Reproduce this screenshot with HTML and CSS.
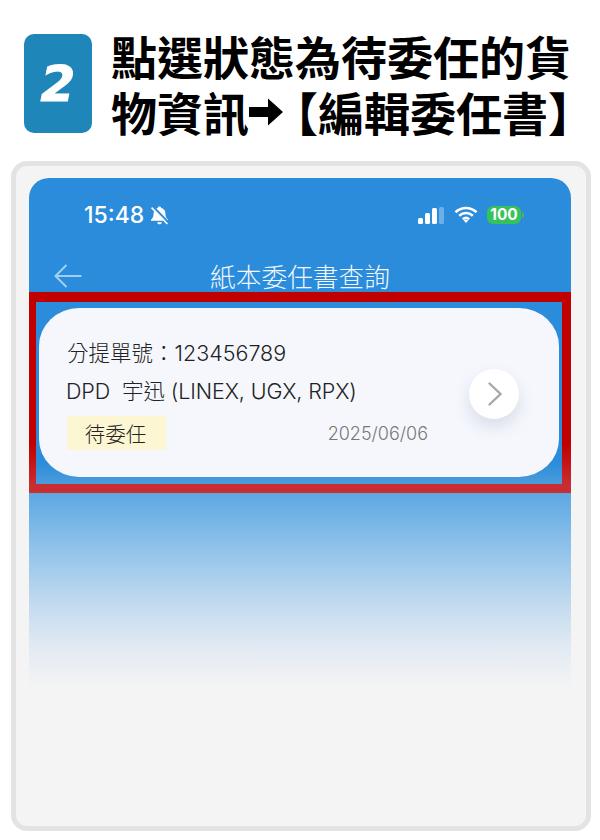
FILE: index.html
```html
<!DOCTYPE html>
<html lang="zh-Hant">
<head>
<meta charset="utf-8">
<title>點選狀態為待委任的貨物資訊</title>
<link rel="stylesheet" href="styles.css">
</head>
<body>
<header class="step">
  <div class="badge"><span class="badge-num">2</span></div>
  <h1 class="step-title">點選狀態為待委任的貨<br>物資訊<svg class="arrow" viewBox="0 0 46 46" aria-hidden="true"><path d="M0 18h19V9.500L34 23 19 36.500V28H0z"/></svg><span class="bracket">【</span>編輯委任書<span class="bracket-end">】</span></h1>
</header>
<main class="frame">
  <section class="phone">
    <div class="status">
      <span class="time">15:48</span>
      <svg class="bell" viewBox="0 0 18 18" aria-hidden="true"><path class="bell-body" d="M9 .5c.9 0 1.500.6 1.600 1.300 2.700.7 4 2.800 4 5.600 0 2.900.9 4.100 2.400 5.500v1H1v-1c1.500-1.400 2.400-2.600 2.400-5.500 0-2.800 1.300-4.900 4-5.600C7.500 1.100 8.100.5 9 .5zM6.800 15.300h4.400c-.2 1.300-1.100 2.100-2.200 2.100s-2-.8-2.200-2.100z"/><path class="bell-cut" d="M2.800 .5l15 15.500"/><path class="bell-slash" d="M1.500 1.500l15 15.500"/></svg>
      <span class="status-gap"></span>
      <svg class="signal" viewBox="0 0 26 17" aria-hidden="true"><rect x="0" y="11" width="5" height="6" rx="1.500"/><rect x="7" y="6" width="5" height="11" rx="1.500"/><rect x="14" y="1" width="5" height="16" rx="1.500"/><rect class="signal-off" x="21" y="0" width="5" height="17" rx="1.500"/></svg>
      <svg class="wifi" viewBox="0 0 24 17" aria-hidden="true"><path d="M1.500 6.200C7.500 .6 16.500 .6 22.500 6.200M5.200 9.800c4-3.700 9.600-3.700 13.600 0M8.800 13.200c1.900-1.700 4.500-1.700 6.400 0"/><path class="wifi-dot" d="M12 17l-2.300-2.500c1.400-.9 3.200-.9 4.600 0z"/></svg>
      <span class="battery">100</span><span class="battery-tip"></span>
    </div>
    <nav class="nav">
      <svg class="back" viewBox="0 0 28 24" aria-hidden="true"><path d="M27.500 12H1.500M12.500 1L1.500 12l11 11"/></svg>
      <span class="nav-title">紙本委任書查詢</span>
    </nav>
    <div class="highlight">
      <article class="card">
        <div class="card-main">
          <p class="line">分提單號：123456789</p>
          <p class="line line-two">DPD&nbsp; 宇迅 (LINEX, UGX, RPX)</p>
          <div class="meta">
            <span class="tag">待委任</span>
            <span class="date">2025/06/06</span>
          </div>
        </div>
        <div class="go"><svg class="chev" viewBox="0 0 14 24" aria-hidden="true"><path d="M1.500 1.500L12.500 12 1.500 22.500"/></svg></div>
      </article>
    </div>
  </section>
</main>
</body>
</html>
```
FILE: styles.css
```css
* { box-sizing: border-box; }
html, body { margin: 0; padding: 0; background: #fff; }
body {
  width: 600px;
  height: 840px;
  overflow: hidden;
  font-family: Inter, "Noto Sans CJK TC", sans-serif;
}
.step {
  display: flex;
  align-items: flex-start;
  gap: 19px;
  height: 161px;
  padding: 34px 0 0 24px;
}
.badge {
  flex: none;
  width: 68px;
  height: 99px;
  border-radius: 10px;
  background: #1f86b9;
  display: flex;
  align-items: center;
  justify-content: center;
}
.badge-num {
  font-family: "DejaVu Sans", sans-serif;
  font-weight: 700;
  font-style: italic;
  font-size: 50px;
  line-height: 1;
  color: #fff;
  -webkit-text-stroke: 1px #fff;
}
.step-title {
  margin: -7px 0 0;
  font-family: "Noto Sans CJK TC", sans-serif;
  font-weight: 700;
  font-size: 46px;
  line-height: 56px;
  color: #000;
  white-space: nowrap;
}
.arrow {
  display: inline-block;
  width: 46px;
  height: 46px;
  vertical-align: -4px;
  fill: #000;
}
.bracket { margin-left: -23px; font-weight: 900; }
.bracket-end { font-weight: 900; }
.frame {
  margin-left: 11px;
  width: 580px;
  height: 670px;
  border: 5px solid #e3e3e3;
  border-radius: 16px;
  background: #f4f4f4;
  padding: 12px 15px 0 13px;
}
.phone {
  height: 512px;
  border-radius: 20px 20px 0 0;
  background: linear-gradient(#2b8cdb 0, #2b8cdb 57%, #5aa6e2 61%, #8fc2ea 72%, #c6dcef 84%, #e6ecf4 93%, #f4f4f4 100%);
  color: #fff;
}
.status {
  height: 74px;
  display: flex;
  align-items: center;
  padding: 0 47px 0 55px;
}
.time {
  font-family: Inter, sans-serif;
  font-weight: 500;
  font-size: 23px;
  line-height: 1;
}
.bell { width: 19px; height: 19px; margin-left: 6px; }
.bell-body { fill: #fff; }
.bell-cut { stroke: #2b8cdb; stroke-width: 2; fill: none; }
.bell-slash { stroke: #fff; stroke-width: 1.500; fill: none; }
.status-gap { flex: 1; }
.signal { width: 26px; height: 17px; fill: #fff; margin-bottom: -1px; }
.signal-off { fill: #6db0e8; }
.wifi {
  width: 24px;
  height: 17px;
  margin-left: 10px;
  margin-right: 9px;
  fill: none;
  stroke: #fff;
  stroke-width: 2.600;
  margin-bottom: 1px;
}
.wifi-dot { fill: #fff; stroke: none; }
.battery {
  width: 34px;
  height: 18px;
  border-radius: 6px;
  background: #34c25a;
  font-family: Inter, sans-serif;
  font-weight: 700;
  font-size: 15.500px;
  line-height: 18px;
  text-align: center;
}
.battery-tip {
  width: 2px;
  height: 6px;
  margin-left: 1px;
  border-radius: 0 2px 2px 0;
  background: #4fae6e;
}
.nav {
  height: 40px;
  padding: 9px 25px 1px;
  display: grid;
  grid-template-columns: 1fr auto 1fr;
  align-items: center;
}
.back {
  width: 28px;
  height: 24px;
  fill: none;
  stroke: #9fd0f6;
  stroke-width: 2;
}
.nav-title {
  font-family: "Noto Sans CJK TC", sans-serif;
  font-weight: 300;
  font-size: 25.700px;
  line-height: 30px;
  color: #f2f8fd;
}
.highlight {
  height: 201px;
  border-style: solid;
  border-width: 10px 9px 9px 7px;
  border-image: linear-gradient(#c00000 0, #c00000 78%, #c92e33 100%) 1;
  padding: 6px 3px 7px;
  background: linear-gradient(#2b8cdb 0, #2b8cdb 88%, #4c9cdb 100%);
}
.card {
  height: 169px;
  border-radius: 40px / 38px;
  background: #f5f7fd;
  color: #222;
  padding: 32px 0 0 28px;
  display: flex;
  align-items: flex-start;
}
.card-main { width: 361px; }
.line {
  margin: 0;
  font-weight: 300;
  font-size: 21.500px;
  line-height: 26px;
}
.line-two { margin-top: 12px; margin-left: -1px; letter-spacing: -.1px; }
.meta {
  margin-top: 12px;
  display: flex;
  align-items: center;
  justify-content: space-between;
}
.tag {
  width: 99px;
  height: 34px;
  background: #fdf6d3;
  font-family: "Noto Sans CJK TC", sans-serif;
  font-size: 20.500px;
  font-weight: 300;
  line-height: 34px;
  text-align: center;
  padding-right: 2px;
}
.date {
  font-weight: 300;
  font-size: 18px;
  color: #777;
}
.go {
  flex: none;
  width: 50px;
  height: 50px;
  margin: 29px 0 0 41px;
  border-radius: 50%;
  background: #fff;
  box-shadow: 0 8px 16px rgba(120, 130, 160, .22);
  display: flex;
  align-items: center;
  justify-content: center;
}
.chev {
  width: 14px;
  height: 24px;
  fill: none;
  stroke: #a8a8a8;
  stroke-width: 2.400;
  stroke-linecap: round;
  margin-left: 2px;
}
```
